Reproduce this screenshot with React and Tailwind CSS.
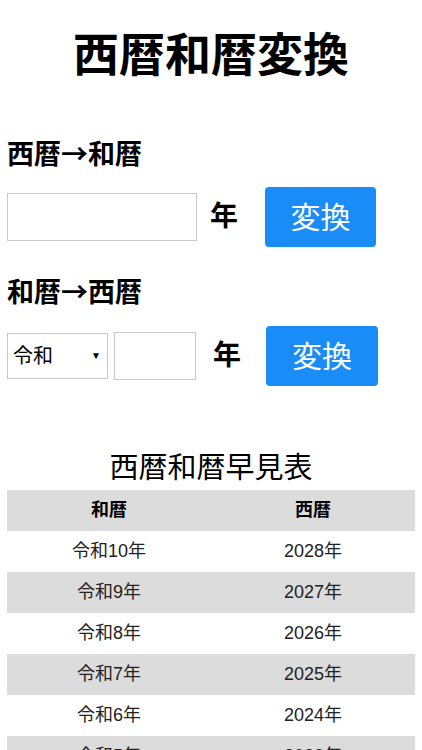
import React, { useState } from 'react';

const font = { fontFamily: '"Liberation Sans", "Noto Sans CJK JP", sans-serif' };
const cjk = { fontFamily: '"Noto Sans CJK JP", sans-serif' };

const rows = [
    ['令和10年', '2028年'],
    ['令和9年', '2027年'],
    ['令和8年', '2026年'],
    ['令和7年', '2025年'],
    ['令和6年', '2024年'],
    ['令和5年', '2023年'],
];

const App = () => {
    const [seireki, setSeireki] = useState('');
    const [era, setEra] = useState('令和');
    const [wareki, setWareki] = useState('');

    return (
        <div className="min-h-screen bg-white text-black px-[7px]" style={font}>
            <h1 className="text-center text-[46px] font-bold leading-none pt-[32px] pb-[61px]">西暦和暦変換</h1>

            <h2 className="text-[27px] font-bold leading-none" style={cjk}>西暦→和暦</h2>
            <div className="flex items-center mt-[21px]">
                <input
                    type="text"
                    value={seireki}
                    onChange={(e) => setSeireki(e.target.value)}
                    className="w-[190px] h-[48px] border border-[#c8c8c8] outline-none px-2 text-[20px]"
                />
                <span className="text-[28px] font-bold ml-[13px]">年</span>
                <button className="ml-[27px] w-[111px] h-[60px] bg-[#1a8cf7] text-white text-[30px] rounded-[4px]">
                    変換
                </button>
            </div>

            <h2 className="text-[27px] font-bold leading-none mt-[30px]" style={cjk}>和暦→西暦</h2>
            <div className="flex items-center mt-[22px]">
                <div className="relative w-[101px] h-[46px] border border-[#c8c8c8]">
                    <select
                        value={era}
                        onChange={(e) => setEra(e.target.value)}
                        className="appearance-none w-full h-full bg-white outline-none pl-[5px] text-[20px]"
                    >
                        <option>令和</option>
                        <option>平成</option>
                        <option>昭和</option>
                        <option>大正</option>
                        <option>明治</option>
                    </select>
                    <span className="absolute right-[6px] top-[14px] text-[10px] pointer-events-none">▼</span>
                </div>
                <input
                    type="text"
                    value={wareki}
                    onChange={(e) => setWareki(e.target.value)}
                    className="ml-[6px] w-[82px] h-[48px] border border-[#c8c8c8] outline-none px-2 text-[20px]"
                />
                <span className="text-[28px] font-bold ml-[17px]">年</span>
                <button className="ml-[25px] w-[112px] h-[60px] bg-[#1a8cf7] text-white text-[30px] rounded-[4px]">
                    変換
                </button>
            </div>

            <h2 className="text-center text-[29px] leading-none mt-[68px] mb-[7px]">西暦和暦早見表</h2>
            <table className="w-full border-collapse text-[18px]">
                <thead>
                    <tr className="bg-[#dcdcdc] h-[41px]">
                        <th className="w-1/2 font-bold">和暦</th>
                        <th className="w-1/2 font-bold">西暦</th>
                    </tr>
                </thead>
                <tbody>
                    {rows.map((r, i) => (
                        <tr key={i} className={`h-[41px] text-[#222] ${i % 2 === 1 ? 'bg-[#dcdcdc]' : 'bg-white'}`}>
                            <td className="text-center">{r[0]}</td>
                            <td className="text-center">{r[1]}</td>
                        </tr>
                    ))}
                </tbody>
            </table>
        </div>
    );
};

export default App;
